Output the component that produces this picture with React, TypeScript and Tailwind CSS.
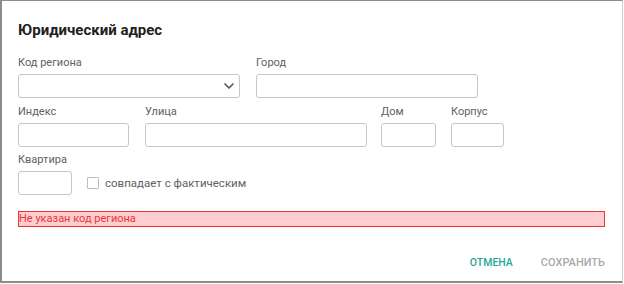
import { ChevronDown } from "lucide-react";

type FieldProps = {
  label: string;
  width: string;
  select?: boolean;
};

const Field = ({ label, width, select }: FieldProps) => {
  return (
    <div className={`flex flex-col ${width}`}>
      <span className="text-[11px] leading-[14px] text-[#616161]">{label}</span>
      <div className="mt-[4px] h-[24px] rounded-[3px] border border-[#c6c6c6] bg-white flex items-center justify-end pr-[2px]">
        {select && <ChevronDown size={16} strokeWidth={2.5} className="text-[#555]" />}
      </div>
    </div>
  );
};

export default function App() {
  return (
    <div
      className="w-[623px] h-[283px] bg-white border-l-2 border-t border-b-2 border-r border-[#8c8c8c] border-r-[#d0d0d0] flex flex-col pl-[16px] pr-[16px] text-[#212121]"
      style={{ fontFamily: "Roboto, 'Liberation Sans', sans-serif" }}
    >
      <h1 className="mt-[19px] text-[15px] leading-[20px] font-bold">Юридический адрес</h1>

      {/* row 1 */}
      <div className="mt-[16px] flex gap-[16px]">
        <Field label="Код региона" width="w-[222px]" select />
        <Field label="Город" width="w-[222px]" />
      </div>

      {/* row 2 */}
      <div className="mt-[7px] flex">
        <Field label="Индекс" width="w-[111px]" />
        <div className="w-[16px]" />
        <Field label="Улица" width="w-[222px]" />
        <div className="w-[14px]" />
        <Field label="Дом" width="w-[55px]" />
        <div className="w-[15px]" />
        <Field label="Корпус" width="w-[53px]" />
      </div>

      {/* row 3 */}
      <div className="mt-[6px] flex items-end">
        <Field label="Квартира" width="w-[54px]" />
        <label className="ml-[15px] mb-[5px] flex items-center gap-[6px]">
          <span className="w-[12px] h-[12px] border border-[#bdbdbd] rounded-[1px] bg-white" />
          <span className="text-[11.5px] leading-[14px] text-[#616161]">совпадает с фактическим</span>
        </label>
      </div>

      <div className="mt-[16px] mr-[1px] h-[16px] bg-[#ffcdd0] border border-[#e53935] flex items-center">
        <span className="text-[11px] leading-[14px] text-[#e53935]">Не указан код региона</span>
      </div>

      <div className="mt-auto mb-[10px] flex justify-end items-center gap-[28px] pr-[1px]">
        <button className="text-[10.5px] font-medium text-[#26a69a]">ОТМЕНА</button>
        <button className="text-[11px] font-medium text-[#a8a8a8]">СОХРАНИТЬ</button>
      </div>
    </div>
  );
}
